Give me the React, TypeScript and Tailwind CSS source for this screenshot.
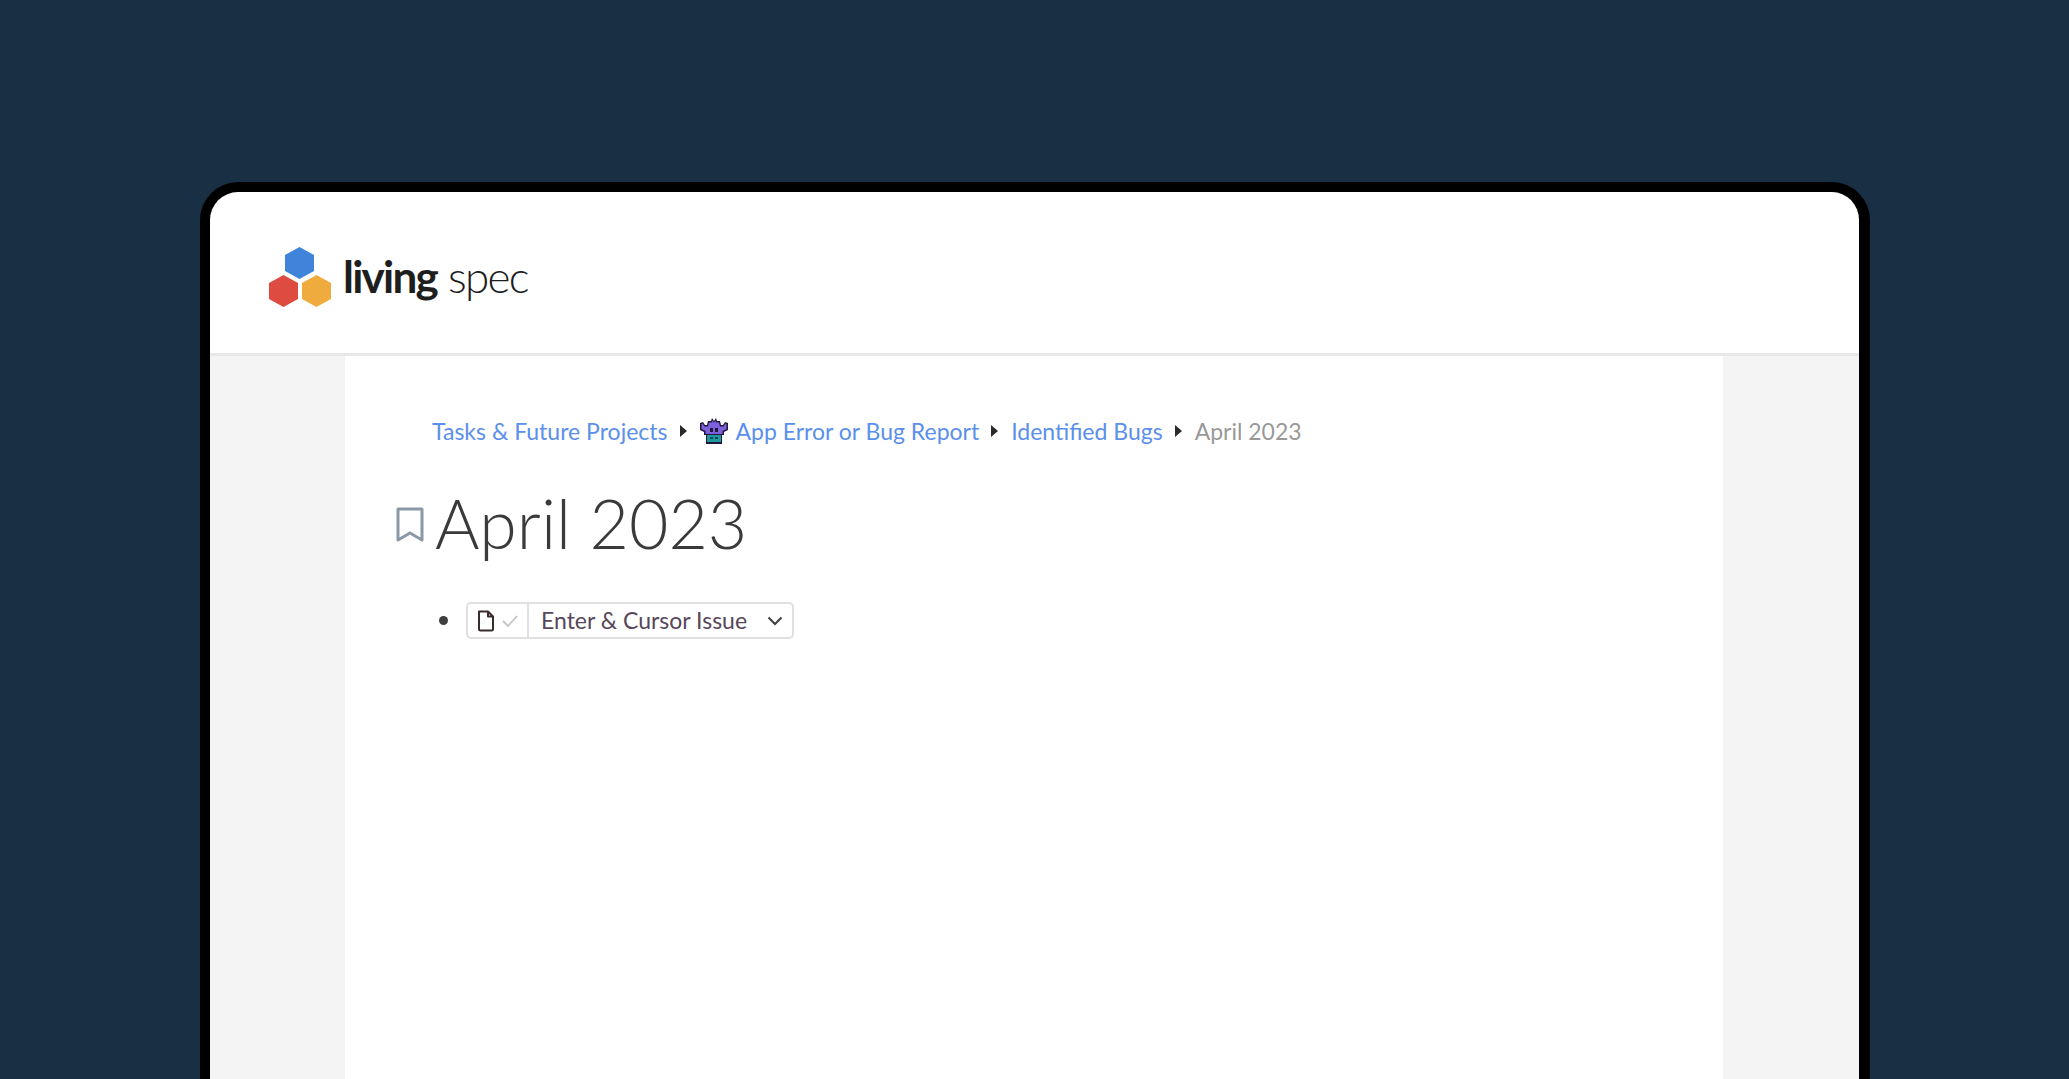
const Hex = ({ fill, x, y }: { fill: string; x: number; y: number }) => (
  <polygon
    fill={fill}
    points={`${x + 14.5},${y} ${x + 29},${y + 8} ${x + 29},${y + 24} ${x + 14.5},${y + 32} ${x},${y + 24} ${x},${y + 8}`}
  />
)

const Logo = () => (
  <svg width="62" height="60" viewBox="0 0 62 60" className="shrink-0">
    <Hex fill="#3f83da" x={16} y={0} />
    <Hex fill="#de4b41" x={0} y={28} />
    <Hex fill="#efab3e" x={33} y={28} />
  </svg>
)

const Caret = () => (
  <svg width="7" height="12" viewBox="0 0 7 12" className="shrink-0">
    <polygon points="0,0 7,6 0,12" fill="#2b2b2b" />
  </svg>
)

// 👾 drawn by hand, no emoji font in the sandbox
const AlienMonster = () => (
  <svg width="28" height="28" viewBox="0 0 28 28" className="shrink-0">
    <path
      d="M0 6l3-1 2 3h2l1-4h3l1-3 2 3 2-3 1 3h3l1 4h2l2-3 3 1v7l-4 2v3h-2v9H6v-9H4v-3l-4-2z"
      fill="#1f1838"
    />
    <path d="M1.500 7l1-.5 2 3h3.500l1-4h3l.5-2 1.500 2 1.500-2 .5 2h3l1 4h3.500l2-3 1 .5v5l-4 2v3H5.500v-3l-4-2z" fill="#7e5fdc" />
    <path d="M7 18h14v7H7z" fill="#1c9aa0" />
    <path d="M10 11h3v4h-3zM15 11h3v4h-3z" fill="#1f1838" />
    <path d="M10 20h3v2h-3zM15 20h3v2h-3z" fill="#0f4a55" />
  </svg>
)

const BreadcrumbLink = ({ children }: { children: string }) => (
  <span className="text-[#5b8fec]">{children}</span>
)

export default function App() {
  return (
    <div className="h-screen overflow-hidden bg-[#192f44] pl-[200px] pr-[199px] pt-[182px] font-['Lato',sans-serif]">
      <div className="flex h-[1000px] flex-col overflow-hidden rounded-t-[38px] border-[10px] border-r-[11px] border-b-0 border-black bg-white">
        {/* Header */}
        <header className="flex h-[164px] shrink-0 items-center gap-[12px] border-b-[3px] border-[#e8e8e8] pl-[59px] pt-[8px]">
          <Logo />
          <div className="flex items-baseline gap-[11px] pb-[2px] text-[44px] tracking-[-0.04em] text-[#1e1e1e]">
            <span className="font-bold">living</span>
            <span className="font-light">spec</span>
          </div>
        </header>

        {/* Page body */}
        <div className="flex flex-1 bg-[#f4f4f4] pl-[135px] pr-[136px]">
          <main className="flex-1 bg-white pt-[60px]">
            <nav className="flex h-[30px] items-center pl-[87px] text-[23px] text-[#999]">
              <BreadcrumbLink>Tasks &amp; Future Projects</BreadcrumbLink>
              <span className="ml-[12px] mr-[13px]"><Caret /></span>
              <AlienMonster />
              <span className="ml-[8px]"><BreadcrumbLink>App Error or Bug Report</BreadcrumbLink></span>
              <span className="ml-[12px] mr-[13px]"><Caret /></span>
              <BreadcrumbLink>Identified Bugs</BreadcrumbLink>
              <span className="ml-[12px] mr-[13px]"><Caret /></span>
              <span>April 2023</span>
            </nav>

            <div className="mt-[37px] flex items-center pl-[51px]">
              <svg width="28" height="36" viewBox="0 0 28 36" fill="none" className="mt-[4px] shrink-0">
                <path d="M2 2h24v31l-12-7-12 7z" stroke="#8b98a6" strokeWidth="3" strokeLinejoin="round" />
              </svg>
              <h1 className="ml-[11px] text-[68px] leading-[80px] font-light text-[#3a3a3a]">April 2023</h1>
            </div>

            <div className="mt-[39px] flex items-center pl-[94px]">
              <span className="h-[9px] w-[9px] rounded-full bg-[#3f3f3f]" />
              <div className="ml-[18px] flex h-[37px] w-[328px] items-center rounded-[5px] border-2 border-[#e0e0e0]">
                <div className="flex h-full w-[61px] shrink-0 items-center gap-[7px] border-r-2 border-[#e0e0e0] pl-[9px]">
                  <svg width="18" height="22" viewBox="0 0 18 22" fill="none" className="shrink-0">
                    <path d="M2 1.500h9l5 5V19a1.500 1.500 0 0 1-1.500 1.500h-11A1.500 1.500 0 0 1 2 19zM11 1.500v5h5" stroke="#3a2b2b" strokeWidth="2" strokeLinejoin="round" />
                  </svg>
                  <svg width="16" height="12" viewBox="0 0 16 12" fill="none" className="shrink-0">
                    <path d="M1 6l5 5 9-10" stroke="#c4c4c4" strokeWidth="1.800" />
                  </svg>
                </div>
                <span className="ml-[12px] flex-1 text-[23px] text-[#57475a]">Enter &amp; Cursor Issue</span>
                <svg width="16" height="10" viewBox="0 0 16 10" fill="none" className="mr-[9px] shrink-0">
                  <path d="M1.500 1.500l6.500 6.500 6.500-6.500" stroke="#3f3f3f" strokeWidth="2" />
                </svg>
              </div>
            </div>
          </main>
        </div>
      </div>
    </div>
  )
}
